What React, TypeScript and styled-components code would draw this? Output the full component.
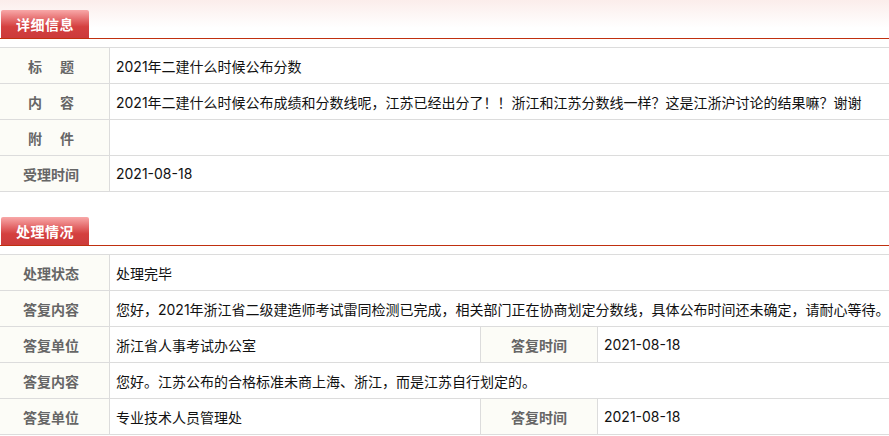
import React from "react";
import styled, { createGlobalStyle } from "styled-components";

const GlobalStyle = createGlobalStyle`
  html, body {
    margin: 0;
    padding: 0;
  }
  body {
    background: linear-gradient(#fbedeb 0px, #ffffff 28px) no-repeat #ffffff;
    font-family: Inter, "Noto Sans CJK SC", "Noto Sans", sans-serif;
    font-size: 14px;
    color: #222;
  }
`;

const Page = styled.div`
  width: 889px;
  overflow: hidden;
`;

const Section = styled.section`
  margin-bottom: 15px;
`;

const SectionHeader = styled.div`
  padding-top: 10px;
  border-bottom: 1px solid #c0300f;
  display: flex;
`;

const Tab = styled.div`
  margin-left: 1px;
  width: 88px;
  height: 28px;
  border-radius: 2px 2px 0 0;
  background: linear-gradient(#f8a8a8 0%, #e46a6b 35%, #d4403f 60%, #cc3b3b 100%);
  color: #fff;
  font-weight: bold;
  font-size: 14px;
  display: flex;
  align-items: center;
  justify-content: center;
  letter-spacing: 0.5px;
`;

const Grid = styled.div<{ $cols: string }>`
  margin-top: 8px;
  display: grid;
  grid-template-columns: ${(p) => p.$cols};
  border-top: 1px solid #dcdcdc;
`;

const Cell = styled.div<{ $span?: number; $first?: boolean }>`
  height: 35px;
  display: flex;
  align-items: center;
  border-bottom: 1px solid #dcdcdc;
  border-left: ${(p) => (p.$first ? "none" : "1px solid #dcdcdc")};
  grid-column: ${(p) => (p.$span ? `span ${p.$span}` : "auto")};
  white-space: nowrap;
  overflow: hidden;
`;

const Label = styled(Cell)`
  background: #fcfcf7;
  color: #666;
  font-weight: bold;
  justify-content: center;
  padding-right: ${(p) => (p.$first ? "7px" : "0")};
`;

const Value = styled(Cell)`
  padding-left: 6px;
  color: #111;
`;

const Spaced = styled.span`
  letter-spacing: 18px;
  margin-right: -18px;
`;

type Row = { label: React.ReactNode; value: string };

const detailRows: Row[] = [
  { label: <Spaced>标题</Spaced>, value: "2021年二建什么时候公布分数" },
  {
    label: <Spaced>内容</Spaced>,
    value:
      "2021年二建什么时候公布成绩和分数线呢，江苏已经出分了！！浙江和江苏分数线一样？这是江浙沪讨论的结果嘛？谢谢",
  },
  { label: <Spaced>附件</Spaced>, value: "" },
  { label: "受理时间", value: "2021-08-18" },
];

export default function App() {
  return (
    <Page>
      <GlobalStyle />
      <Section>
        <SectionHeader>
          <Tab>详细信息</Tab>
        </SectionHeader>
        <Grid $cols="109px 1fr">
          {detailRows.map((r, i) => (
            <React.Fragment key={i}>
              <Label $first>{r.label}</Label>
              <Value>{r.value}</Value>
            </React.Fragment>
          ))}
        </Grid>
      </Section>
      <Section>
        <SectionHeader>
          <Tab>处理情况</Tab>
        </SectionHeader>
        <Grid $cols="109px 371px 117px 1fr">
          <Label $first>处理状态</Label>
          <Value $span={3}>处理完毕</Value>

          <Label $first>答复内容</Label>
          <Value $span={3}>
            您好，2021年浙江省二级建造师考试雷同检测已完成，相关部门正在协商划定分数线，具体公布时间还未确定，请耐心等待。
          </Value>

          <Label $first>答复单位</Label>
          <Value>浙江省人事考试办公室</Value>
          <Label>答复时间</Label>
          <Value>2021-08-18</Value>

          <Label $first>答复内容</Label>
          <Value $span={3}>您好。江苏公布的合格标准未商上海、浙江，而是江苏自行划定的。</Value>

          <Label $first>答复单位</Label>
          <Value>专业技术人员管理处</Value>
          <Label>答复时间</Label>
          <Value>2021-08-18</Value>
        </Grid>
      </Section>
    </Page>
  );
}
